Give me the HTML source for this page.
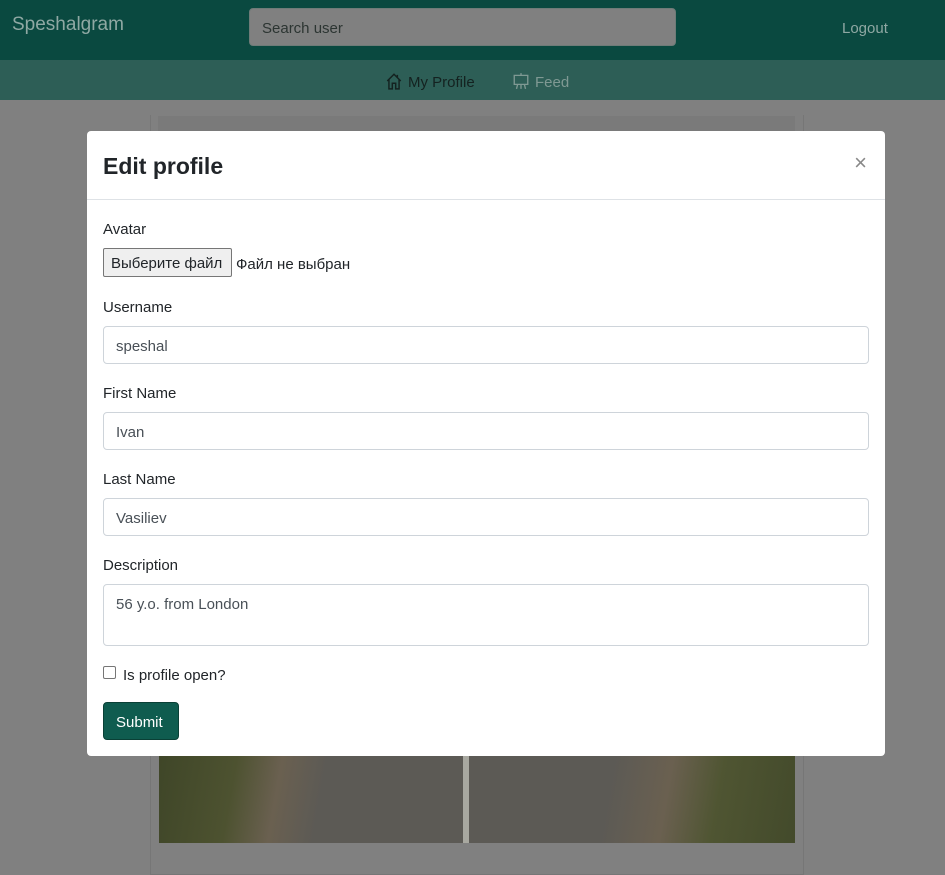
<!DOCTYPE html>
<html><head><meta charset="utf-8"><style>
*{box-sizing:border-box;margin:0;padding:0}
body{width:945px;height:866px;overflow:hidden;background:#808080;font-family:"Liberation Sans","Noto Sans CJK SC",sans-serif;color:#212529;position:relative}
.nav{position:absolute;left:0;top:0;width:945px;height:60px;background:#0a4940}
.brand{position:absolute;left:12px;top:14px;font-size:19px;color:#8fa8a3}
.search{position:absolute;left:249px;top:8px;width:427px;height:38px;background:#808080;border:1px solid #6f7b78;border-radius:4px;font-size:15px;color:#2c3532;padding:11px 12px}
.logout{position:absolute;left:842px;top:20px;font-size:15px;color:#8fa8a3}
.sub{position:absolute;left:0;top:60px;width:945px;height:40px;background:#2d5e56;font-size:15px}
.sub .a{position:absolute;left:385px;top:12px;color:#142220}
.sub .b{position:absolute;left:512px;top:12px;color:#7f9993}
.card{position:absolute;left:150px;top:115px;width:654px;height:760px;border:1px solid #767676;border-top:none}
.cardtop{position:absolute;left:158px;top:116px;width:637px;height:20px;background:#7a7a7a}
.photo{position:absolute;left:159px;top:756px;width:636px;height:87px;background:
linear-gradient(90deg,transparent 0,transparent 304px,#a8a8a0 304px,#a8a8a0 310px,transparent 310px),
linear-gradient(100deg,#3f4628 0,#4d5230 12%,#6a6050 19%,#5c5a55 26%,#5c5a55 70%,#6a6050 79%,#4f5532 87%,#434a2b 100%)}
.modal{position:absolute;left:87px;top:131px;width:798px;height:625px;background:#fff;border-radius:4px}
.mh{height:69px;border-bottom:1px solid #dee2e6;position:relative}
.mh h5{position:absolute;left:16px;top:22px;font-size:23px;font-weight:600}
.close{position:absolute;right:18px;top:19px;font-size:22px;color:#888}
label{position:absolute;left:16px;font-size:15px}
.in{position:absolute;left:16px;width:766px;height:38px;border:1px solid #ced4da;border-radius:4px;font-size:15px;color:#495057;padding:11px 12px}
.fbtn{position:absolute;left:16px;top:117px;width:129px;height:29px;background:#efefef;border:1px solid #767676;border-radius:2px;font-size:15px;padding:6px 7px}
.ftxt{position:absolute;left:149px;top:125px;font-size:15px}
.cb{position:absolute;left:16px;top:535px;width:13px;height:13px;border:1px solid #767676;border-radius:2px}
.btn{position:absolute;left:16px;top:571px;width:76px;height:38px;background:#0f5c4f;border:1px solid #0a4036;border-radius:4px;color:#fff;font-size:15px;padding:11px 12px}
</style></head><body>
<div class="nav"><div class="brand">Speshalgram</div><div class="search">Search user</div><div class="logout">Logout</div></div>
<div class="sub">
<span class="a"><svg width="18" height="18" viewBox="0 0 16 16" style="vertical-align:-3px;margin-right:5px"><path d="M2 8 L8 2 L14 8 M3.5 6.5 V15 H6.5 V10 H9.5 V15 H12.5 V6.5 M11 2.5 V5" fill="none" stroke="#142220" stroke-width="1.3"/></svg>My Profile</span>
<span class="b"><svg width="18" height="18" viewBox="0 0 16 16" style="vertical-align:-3px;margin-right:5px"><path d="M8 1 V3 M2 3 H14 V11 H2 Z M5 11 L4 15 M11 11 L12 15 M8 11 V15" fill="none" stroke="#7f9993" stroke-width="1.2"/></svg>Feed</span>
</div>
<div class="card"></div><div class="cardtop"></div>
<div class="photo"></div>
<div class="modal">
<div class="mh"><h5>Edit profile</h5><div class="close">×</div></div>
<label style="top:90px">Avatar</label>
<div class="fbtn">Выберите файл</div><div class="ftxt">Файл не выбран</div>
<label style="top:168px">Username</label><div class="in" style="top:195px">speshal</div>
<label style="top:254px">First Name</label><div class="in" style="top:281px">Ivan</div>
<label style="top:340px">Last Name</label><div class="in" style="top:367px">Vasiliev</div>
<label style="top:426px">Description</label><div class="in" style="top:453px;height:62px">56 y.o. from London</div>
<div class="cb"></div><label style="top:536px;left:36px">Is profile open?</label>
<div class="btn">Submit</div>
</div>
</body></html>
